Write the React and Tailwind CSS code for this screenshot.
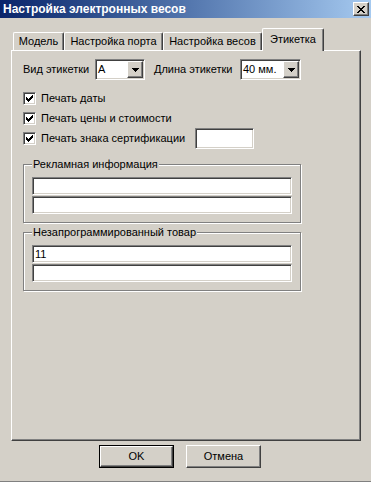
const face = "bg-[#d4d0c8]";
const sunken =
  "border border-t-[#808080] border-l-[#808080] border-r-white border-b-white shadow-[inset_1px_1px_0_#404040,inset_-1px_-1px_0_#d4d0c8]";
const raised =
  "border border-t-white border-l-white border-r-[#404040] border-b-[#404040] shadow-[inset_-1px_-1px_0_#808080]";

// classic 7x7 check mark, drawn column by column
const CHECK = [2, 3, 4, 3, 2, 1, 0]
  .map((d, i) => `M${2 + i} ${2 + d}h1v3h-1z`)
  .join("");

const Checkbox = () => (
  <span className={`block w-[13px] h-[13px] shrink-0 bg-white ${sunken}`}>
    <svg width="11" height="11" viewBox="0 0 11 11" shapeRendering="crispEdges" className="block">
      <path d={CHECK} fill="#000" />
    </svg>
  </span>
);

const Combo = ({ value, className }) => (
  <div className={`flex h-[21px] p-px bg-white ${sunken} ${className}`}>
    <span className="flex-1 pl-px leading-[17px]">{value}</span>
    <span className={`flex items-center justify-center w-[16px] h-[17px] ${face} ${raised}`}>
      <svg width="7" height="4" viewBox="0 0 7 4" shapeRendering="crispEdges" className="block">
        <path d="M0 0h7v1h-1v1h-1v1h-1v1h-1v-1h-1v-1h-1v-1h-1z" fill="#000" />
      </svg>
    </span>
  </div>
);

const Edit = ({ value = "", className = "" }) => (
  <div className={`h-[18px] bg-white px-[2px] leading-[16px] ${sunken} ${className}`}>{value}</div>
);

const Group = ({ title, lines, className = "" }) => (
  <fieldset
    className={`w-[278px] border border-[#808080] px-[8px] pt-[6px] pb-[8px] shadow-[inset_1px_1px_0_#fff,1px_1px_0_#fff] ${className}`}
  >
    <legend className={`px-px leading-[13px] ${face}`}>{title}</legend>
    <div className="flex flex-col gap-px">
      {lines.map((v, i) => (
        <Edit key={i} value={v} className="w-[260px]" />
      ))}
    </div>
  </fieldset>
);

const tabs = [
  { label: "Модель", w: "w-[51px]" },
  { label: "Настройка порта", w: "w-[99px]" },
  { label: "Настройка весов", w: "w-[99px]" },
  { label: "Этикетка", w: "w-[62px]", active: true },
];

export default function App() {
  return (
    <div
      className={`flex flex-col h-[482px] ${face} border-b border-[#808080] text-[11px] text-black font-['Liberation_Sans',Arial,sans-serif]`}
    >
      {/* title bar */}
      <div className="flex items-center justify-between h-[18px] pl-[3px] pr-[2px] bg-linear-to-r from-[#0a246a] to-[#a6caf0]">
        <span className="text-white font-bold text-[12px] leading-none">Настройка электронных весов</span>
        <span className={`flex items-center justify-center w-[16px] h-[14px] ${face} ${raised}`}>
          <svg width="8" height="7" viewBox="0 0 8 7" shapeRendering="crispEdges" className="block">
            <path
              d="M0 0h2v1h1v1h2v-1h1v-1h2v1h-1v1h-1v1h-1v1h1v1h1v1h1v1h-2v-1h-1v-1h-2v1h-1v1h-2v-1h1v-1h1v-1h1v-1h-1v-1h-1v-1h-1z"
              fill="#000"
            />
          </svg>
        </span>
      </div>

      <div className="flex flex-col pl-[11px] pr-[10px] pt-[10px]">
        {/* tabs */}
        <div className="flex items-end h-[22px] pl-[2px]">
          {tabs.map((t) =>
            t.active ? (
              <div
                key={t.label}
                className={`relative z-10 -mb-px flex items-center justify-center h-[23px] ${t.w} ${face} border-t border-l border-white border-r border-r-[#404040] shadow-[inset_-1px_0_0_#808080] rounded-t-[2px] pb-[2px]`}
              >
                {t.label}
              </div>
            ) : (
              <div
                key={t.label}
                className={`flex items-center justify-center h-[18px] ${t.w} border-t border-l border-white border-r border-r-[#404040] shadow-[inset_-1px_0_0_#808080] rounded-t-[2px]`}
              >
                {t.label}
              </div>
            )
          )}
        </div>

        {/* tab page */}
        <div className={`flex flex-col h-[391px] pl-[11px] pt-[8px] ${raised}`}>
          <div className="flex items-center h-[21px]">
            <span className="w-[72px] whitespace-nowrap">Вид этикетки</span>
            <Combo value="А" className="w-[50px]" />
            <span className="ml-[9px] w-[86px] whitespace-nowrap">Длина этикетки</span>
            <Combo value="40 мм." className="w-[61px]" />
          </div>

          <div className="flex items-center gap-[5px] h-[20px] mt-[8px]">
            <Checkbox />
            <span>Печать даты</span>
          </div>
          <div className="flex items-center gap-[5px] h-[20px]">
            <Checkbox />
            <span>Печать цены и стоимости</span>
          </div>
          <div className="flex items-center gap-[5px] h-[21px]">
            <Checkbox />
            <span className="w-[149px] whitespace-nowrap">Печать знака сертификации</span>
            <div className={`w-[59px] h-[21px] bg-white ${sunken}`} />
          </div>

          <Group title="Рекламная информация" lines={["", ""]} className="mt-[9px]" />
          <Group title="Незапрограммированный товар" lines={["11", ""]} className="mt-[3px]" />
        </div>

        {/* dialog buttons */}
        <div className="flex gap-[12px] pl-[88px] mt-[4px]">
          <div className="w-[75px] h-[23px] border border-black">
            <div className={`flex items-center justify-center h-full ${raised}`}>OK</div>
          </div>
          <div className={`flex items-center justify-center w-[75px] h-[23px] ${raised}`}>Отмена</div>
        </div>
      </div>
    </div>
  );
}
